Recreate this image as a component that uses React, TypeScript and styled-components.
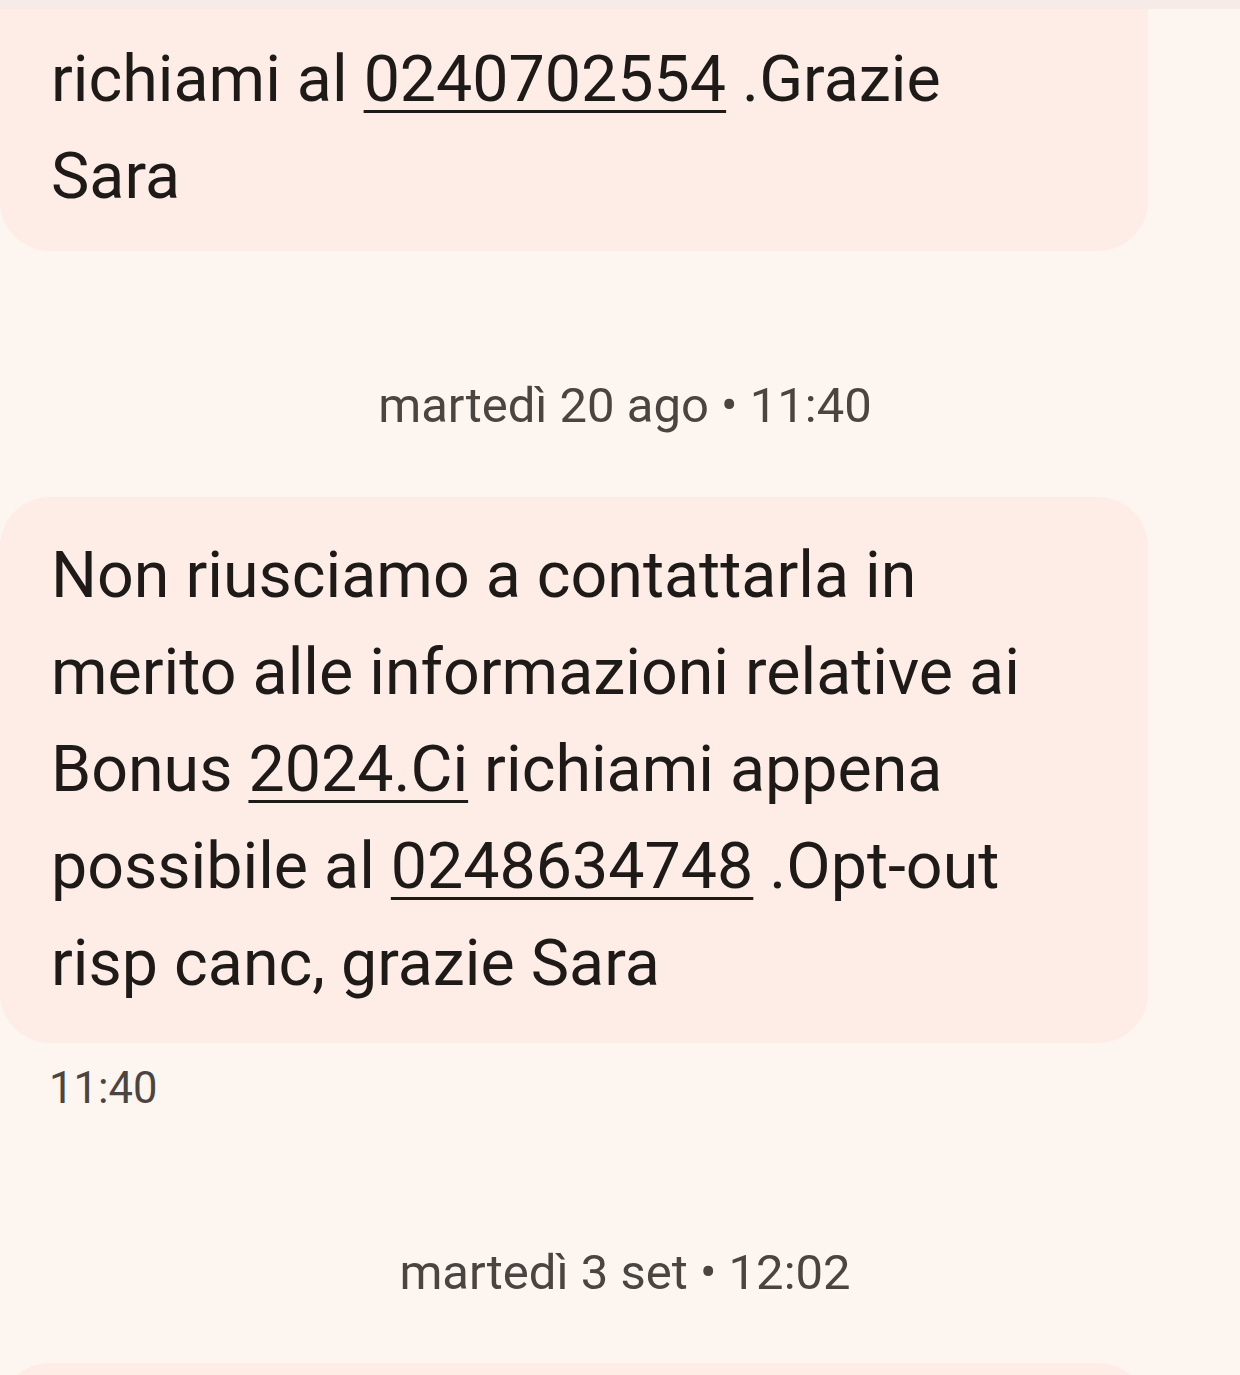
import styled, { createGlobalStyle } from "styled-components";

const GlobalStyle = createGlobalStyle`
    html, body {
        margin: 0;
        padding: 0;
        background-color: #fdf5f0;
    }
    body {
        font-family: Roboto, "Noto Sans", sans-serif;
    }
`

const Thread = styled.div`
    width: 1240px;
    height: 1375px;
    background-color: #fdf5f0;
    border-top: 9px solid #f6ebe7;
    box-sizing: border-box;
    display: flex;
    flex-direction: column;
    overflow: hidden;
`

const Bubble = styled.div<{ $cut?: boolean; $top?: number }>`
    flex-shrink: 0;
    width: 1148px;
    min-height: 120px;
    margin-top: ${(props) => props.$top ?? 0}px;
    box-sizing: border-box;
    background-color: #fdede6;
    border-radius: ${(props) => (props.$cut ? "0 0 50px 50px" : "50px")};
    padding: ${(props) => (props.$cut ? "22px 51px 26px" : "30px 51px 31px")};
    font-size: 64.5px;
    line-height: 97px;
    color: #1e1a18;
`

const Phone = styled.span`
    text-decoration: underline;
    text-decoration-thickness: 3px;
    text-underline-offset: 9px;
`

const DateLabel = styled.div<{ $top: number }>`
    flex-shrink: 0;
    margin-top: ${(props) => props.$top}px;
    text-align: center;
    padding-left: 10px;
    font-size: 49px;
    line-height: 60px;
    color: #4b4542;
`

const TimeLabel = styled.div`
    flex-shrink: 0;
    margin-top: 16px;
    padding-left: 49px;
    font-size: 43.5px;
    line-height: 60px;
    color: #4b4542;
`

export default function App() {
    return (
        <>
            <GlobalStyle />
            <Thread>
                <Bubble $cut>
                    richiami al <Phone>0240702554</Phone> .Grazie
                    <br />
                    Sara
                </Bubble>

                <DateLabel $top={125}>martedì 20 ago • 11:40</DateLabel>

                <Bubble $top={61}>
                    Non riusciamo a contattarla in
                    <br />
                    merito alle informazioni relative ai
                    <br />
                    Bonus <Phone>2024.Ci</Phone> richiami appena
                    <br />
                    possibile al <Phone>0248634748</Phone> .Opt-out
                    <br />
                    risp canc, grazie Sara
                </Bubble>
                <TimeLabel>11:40</TimeLabel>

                <DateLabel $top={124}>martedì 3 set • 12:02</DateLabel>

                <Bubble $top={60} />
            </Thread>
        </>
    )
}
